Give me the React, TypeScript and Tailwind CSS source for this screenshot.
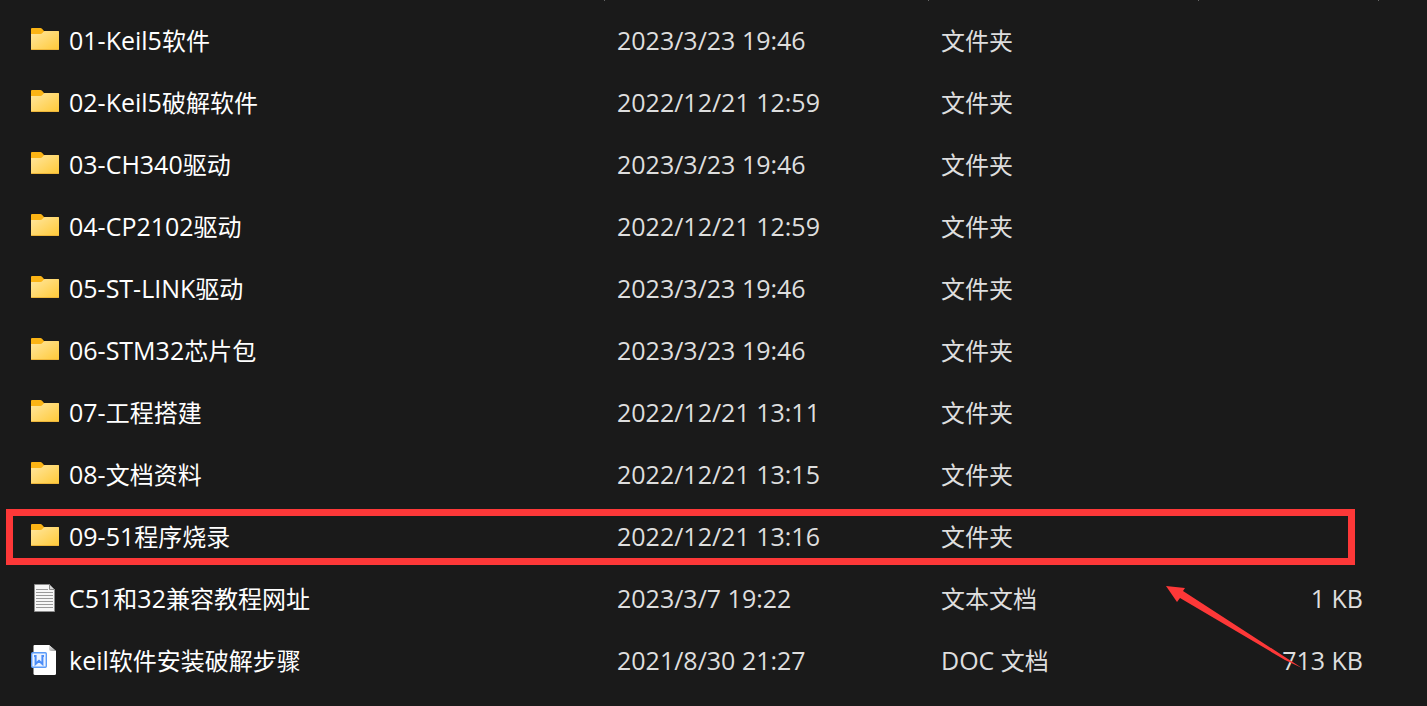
type Kind = "folder" | "text" | "word";

type Entry = {
  name: string;
  modified: string;
  type: string;
  kind: Kind;
  size?: string;
  marked?: boolean;
};

const entries: Entry[] = [
  { name: "01-Keil5软件", modified: "2023/3/23 19:46", type: "文件夹", kind: "folder" },
  { name: "02-Keil5破解软件", modified: "2022/12/21 12:59", type: "文件夹", kind: "folder" },
  { name: "03-CH340驱动", modified: "2023/3/23 19:46", type: "文件夹", kind: "folder" },
  { name: "04-CP2102驱动", modified: "2022/12/21 12:59", type: "文件夹", kind: "folder" },
  { name: "05-ST-LINK驱动", modified: "2023/3/23 19:46", type: "文件夹", kind: "folder" },
  { name: "06-STM32芯片包", modified: "2023/3/23 19:46", type: "文件夹", kind: "folder" },
  { name: "07-工程搭建", modified: "2022/12/21 13:11", type: "文件夹", kind: "folder" },
  { name: "08-文档资料", modified: "2022/12/21 13:15", type: "文件夹", kind: "folder" },
  { name: "09-51程序烧录", modified: "2022/12/21 13:16", type: "文件夹", kind: "folder", marked: true },
  { name: "C51和32兼容教程网址", modified: "2023/3/7 19:22", type: "文本文档", kind: "text", size: "1 KB" },
  { name: "keil软件安装破解步骤", modified: "2021/8/30 21:27", type: "DOC 文档", kind: "word", size: "713 KB" },
];

function FolderIcon() {
  return (
    <svg viewBox="0 -1 28 32" className="h-8 w-7 shrink-0" aria-hidden="true">
      <defs>
        <linearGradient id="folder-front" x1="0" y1="0" x2="1" y2="1">
          <stop offset="0" stopColor="#ffe7a0" />
          <stop offset="1" stopColor="#ffc937" />
        </linearGradient>
      </defs>
      <path d="M0 4Q0 3 1 3H9.5Q10.3 3 11 3.8L13 6H27Q28 6 28 7V12H0Z" fill="#fbb415" />
      <path d="M0 9H9.5Q10.5 9 11.2 8.2L12.5 6.8Q13.2 6 14 6H27Q28 6 28 7V24Q28 25 27 25H1Q0 25 0 24Z" fill="url(#folder-front)" />
      <path d="M0 24Q0 25 1 25H27Q28 25 28 24Z" fill="#eeb63a" />
    </svg>
  );
}

function TextIcon() {
  return (
    <svg viewBox="0 -1 28 32" className="h-8 w-7 shrink-0" aria-hidden="true">
      <path d="M3.5 1.5H18.5L23.5 6.5V28.5H3.5Z" fill="#f7f7f7" stroke="#8c8c8c" />
      <path d="M18.5 1.5V6.5H23.5Z" fill="#d9d9d9" stroke="#8c8c8c" />
      <path d="M5 6.5H17M5 9.5H22M5 12.5H22M5 15.5H22M5 18.5H22M5 21.5H22M5 24.5H22" stroke="#9a9a9a" />
    </svg>
  );
}

function WordIcon() {
  return (
    <svg viewBox="0 -1 28 32" className="h-8 w-7 shrink-0" aria-hidden="true">
      <defs>
        <linearGradient id="page-fold" x1="0" y1="0" x2="1" y2="1">
          <stop offset="0" stopColor="#e6e6e6" />
          <stop offset="1" stopColor="#9f9f9f" />
        </linearGradient>
      </defs>
      <path d="M3.5 0H18L25 6V28.5Q25 30 23.5 30H4Q2.500 30 2.5 28.5V1Q2.5 0 3.5 0Z" fill="#ffffff" />
      <path d="M18 0L25 6H20Q18 6 18 4Z" fill="url(#page-fold)" />
      <rect x="0.7" y="7.7" width="14.6" height="14.6" rx="1" fill="#eaf2ff" stroke="#5b9bf8" strokeWidth="1.4" />
      <path d="M3 11H4.6V19L8 15.800L11.4 19V11H13" fill="none" stroke="#4b8df8" strokeWidth="2" />
    </svg>
  );
}

const icons = { folder: FolderIcon, text: TextIcon, word: WordIcon };

const headings = ["名称", "修改日期", "类型", "大小"];

/* Han characters are set one step smaller than the Latin text beside them. */
function MixedText({ text }: { text: string }) {
  return (
    <span>
      {text.split(/([\u4e00-\u9fff]+)/).map((run, index) =>
        index % 2 === 1 ? (
          <span key={index} className="text-[24px]">
            {run}
          </span>
        ) : (
          run
        ),
      )}
    </span>
  );
}

function Row({ entry }: { entry: Entry }) {
  const Icon = icons[entry.kind];
  return (
    <tr className="relative h-[62px]">
      <td className="p-0 pl-[31px]">
        <div className="flex items-center gap-[10px] text-white">
          <Icon />
          <MixedText text={entry.name} />
        </div>
        {entry.marked && (
          <div className="pointer-events-none absolute top-1 bottom-0.5 left-[6px] right-[72px] border-[7px] border-[#fd3838]" />
        )}
      </td>
      <td className="p-0 pl-3">{entry.modified}</td>
      <td className="p-0 pl-3">
        <MixedText text={entry.type} />
      </td>
      <td className="p-0 pr-4 text-right">{entry.size}</td>
      <td className="p-0" />
    </tr>
  );
}

export default function App() {
  return (
    <main className="relative min-h-screen bg-[#1a1a1a] font-['Open_Sans','Noto_Sans_CJK_SC',sans-serif] text-[25px] leading-8 text-[#dedede]">
      <table className="w-full table-fixed border-collapse whitespace-nowrap">
        <colgroup>
          <col className="w-[605px]" />
          <col className="w-[324px]" />
          <col className="w-[270px]" />
          <col className="w-[180px]" />
          <col />
        </colgroup>
        <thead>
          <tr className="h-[9px]">
            {headings.map((heading) => (
              <th key={heading} aria-label={heading} className="p-0 align-top">
                <div className="ml-auto h-px w-px bg-[#636363]" />
              </th>
            ))}
            <td className="p-0" />
          </tr>
        </thead>
        <tbody>
          {entries.map((entry) => (
            <Row key={entry.name} entry={entry} />
          ))}
        </tbody>
      </table>
      <svg viewBox="0 0 140 84" className="pointer-events-none absolute top-[585px] left-[1165px] h-[84px] w-[140px]" aria-hidden="true">
        <path d="M1 1L20 3L18 6L123 74L137 83L120 75L15 13L12 17Z" fill="#fd3838" />
      </svg>
    </main>
  );
}
